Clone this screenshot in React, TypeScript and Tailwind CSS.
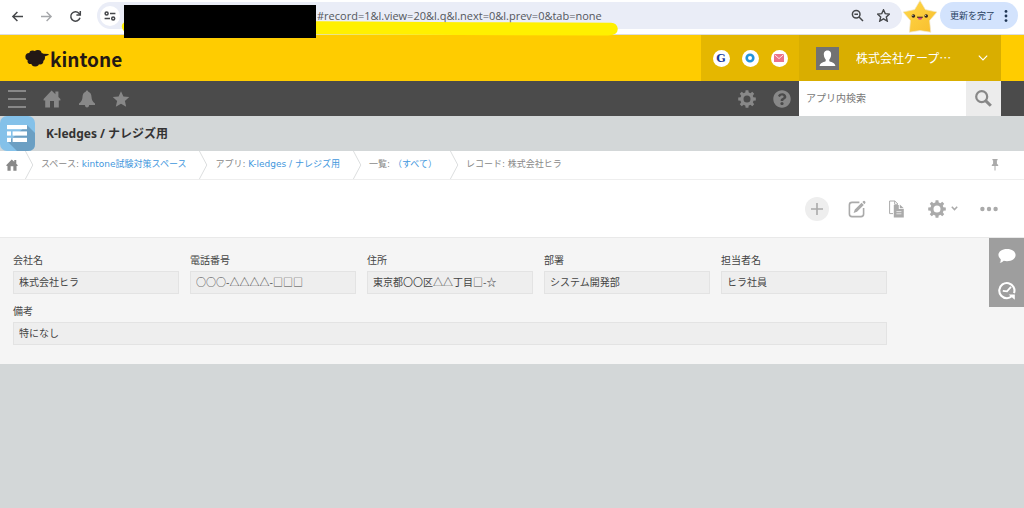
import React from "react";
import { FaQuestionCircle } from "react-icons/fa";

const UI_FONT = "font-['DejaVu_Sans','Noto_Sans_CJK_JP',sans-serif]";
const JP_FONT = "font-['Noto_Sans_CJK_JP',sans-serif]";
const CHROME_FONT = "font-['Open_Sans','Noto_Sans_CJK_JP',sans-serif]";

const STAR =
  "M12 1.5 L15.2 8.6 L23 9.4 L17.2 14.6 L18.9 22.3 L12 18.3 L5.1 22.3 L6.8 14.6 L1 9.4 L8.8 8.6 Z";

function Gear({ className }: { className?: string }) {
  return (
    <svg viewBox="0 0 18 18" className={className} aria-hidden="true">
      <circle cx="9" cy="9" r="5.1" fill="none" stroke="currentColor" strokeWidth="3.2" />
      {[0, 45, 90, 135, 180, 225, 270, 315].map((a) => (
        <path key={a} d="M7.2 3.2 L7.6 0.2 H10.4 L10.8 3.2 Z" fill="currentColor" transform={`rotate(${a} 9 9)`} />
      ))}
    </svg>
  );
}

function House({ className }: { className?: string }) {
  return (
    <svg viewBox="0 0 18 18" className={className} aria-hidden="true">
      <path
        fill="currentColor"
        d="M8.6 0.6 L12.4 4.2 V1.6 H15.4 V7 L17.4 9 V10.6 H15.8 V17.6 H11 V11 H7 V17.6 H2.2 V10.6 H0.6 V9 Z"
      />
    </svg>
  );
}

function BrowserBar() {
  return (
    <div className={`relative z-10 flex h-[35px] items-start border-b border-[#dcdde0] bg-white pt-[2px] pl-[11px] ${CHROME_FONT}`}>
      <div className="flex h-7 items-center gap-4">
        <button aria-label="戻る" className="text-[#45474a]">
          <svg viewBox="0 0 13 13" className="size-[13px]" fill="none" stroke="currentColor" strokeWidth="1.5">
            <path d="M12 6.5 H2 M6.4 2 L1.9 6.5 L6.4 11" />
          </svg>
        </button>
        <button aria-label="進む" className="text-[#a5a7aa]">
          <svg viewBox="0 0 13 13" className="size-[13px]" fill="none" stroke="currentColor" strokeWidth="1.4">
            <path d="M1 6.5 H11 M6.6 2 L11.1 6.5 L6.6 11" />
          </svg>
        </button>
        <button aria-label="再読み込み" className="text-[#45474a]">
          <svg viewBox="0 0 13 13" className="size-[13px]" fill="none" stroke="currentColor" strokeWidth="1.5">
            <path d="M11 7.8 A4.7 4.7 0 1 1 9.9 3.2 L11 4.4" />
            <path d="M11.3 1 V5 H7.4" />
          </svg>
        </button>
      </div>
      <div className="ml-[15px] flex h-[27px] flex-1 items-center rounded-full bg-[#eaedf7] pr-3 pl-[3px]">
        <button aria-label="サイト情報" className="flex size-5 items-center justify-center rounded-full bg-white text-[#45474a]">
          <svg viewBox="0 0 12 10" className="h-[10px] w-3" fill="none" stroke="currentColor" strokeWidth="1.5">
            <circle cx="2.6" cy="2.4" r="1.5" />
            <path d="M6 2.4 H11.4 M0.6 7.6 H6" />
            <circle cx="9.2" cy="7.6" r="1.5" />
          </svg>
        </button>
        <input
          aria-label="アドレス"
          readOnly
          defaultValue="#record=1&l.view=20&l.q&l.next=0&l.prev=0&tab=none"
          className="ml-[197px] h-5 min-w-0 flex-1 bg-transparent text-[11px] text-[#54575d] outline-none"
        />
        <button aria-label="ズーム" className="mr-[13px] text-[#45474a]">
          <svg viewBox="0 0 13 13" className="size-[13px]" fill="none" stroke="currentColor" strokeWidth="1.5">
            <circle cx="5.2" cy="5.2" r="3.8" />
            <path d="M8 8 L12 12 M3.4 5.2 H7" />
          </svg>
        </button>
        <button aria-label="ブックマーク" className="text-[#45474a]">
          <svg viewBox="0 0 24 24" className="size-[13px]" fill="none" stroke="currentColor" strokeWidth="2.6">
            <path d={STAR} />
          </svg>
        </button>
      </div>
      <svg viewBox="0 0 36 34" className="-mt-[2px] h-[34px] w-9" aria-hidden="true">
        <defs>
          <linearGradient id="star" x1="0" y1="0" x2="1" y2="1">
            <stop offset="0" stopColor="#ffd94a" />
            <stop offset="1" stopColor="#f8bd2c" />
          </linearGradient>
        </defs>
        <path
          d="M18 0.4 L23.4 9.6 L35 12 L27.6 20.6 L28.8 32.2 L18 30.6 L7.4 32.2 L8.4 20.6 L1 12 L12.6 9.6 Z"
          fill="url(#star)"
          stroke="#f1e7cf"
          strokeWidth="0.7"
          strokeLinejoin="round"
        />
        <circle cx="11.4" cy="16" r="1.8" fill="#33251c" />
        <circle cx="24.2" cy="16" r="1.8" fill="#33251c" />
        <circle cx="10.9" cy="15.4" r="0.5" fill="#fff" />
        <circle cx="23.7" cy="15.4" r="0.5" fill="#fff" />
        <path d="M15.6 17.2 H20.4 Q20 19.8 18 19.8 Q16 19.8 15.6 17.2 Z" fill="#d8437c" />
        <path d="M15 17.2 H20.8" stroke="#33251c" strokeWidth="1" />
      </svg>
      <button className="mr-[6px] ml-[2px] flex h-[27px] w-[78px] items-center justify-between rounded-full bg-[#d3e3fd] pr-[10px] pl-[10px] text-[9px] text-[#27405f]">
        更新を完了
        <svg viewBox="0 0 4 14" className="h-[14px] w-1" fill="#1f3554">
          <circle cx="2" cy="2.4" r="1.4" />
          <circle cx="2" cy="7" r="1.4" />
          <circle cx="2" cy="11.6" r="1.4" />
        </svg>
      </button>
      <svg viewBox="0 0 500 16" className="absolute top-[20px] left-[120px] h-4 w-[500px]" aria-hidden="true">
        <path
          d="M9 1.2 Q1.5 1.6 1.8 6.5 Q2.2 12 9 13.5 L230 14.4 L340 15 L488 15.6 Q497.8 15 497.8 9 Q497.4 3.2 491 2.8 L350 2.2 L200 1.2 Z"
          fill="#fff000"
        />
      </svg>
      <div className="absolute top-[5px] left-[124px] h-[33px] w-[192px] bg-black" />
    </div>
  );
}

function Header() {
  return (
    <header className="flex h-[46px] items-stretch bg-[#ffcc00]">
      <a href="#top" aria-label="kintone" className="ml-6 flex items-center text-[#231815]">
        <svg viewBox="0 0 26 18" className="h-[18px] w-[26px]" fill="currentColor">
          <circle cx="5.2" cy="7.8" r="3.8" />
          <circle cx="8.6" cy="4.8" r="3.4" />
          <circle cx="13.8" cy="4.9" r="3.9" />
          <circle cx="17.2" cy="8.4" r="3.8" />
          <circle cx="16" cy="12" r="3.4" />
          <circle cx="11.2" cy="13.4" r="4" />
          <circle cx="6.4" cy="12.2" r="2.8" />
          <ellipse cx="11" cy="9" rx="7" ry="5" />
          <path d="M16 3.4 L19.6 4.8 L24.6 5 V6 L20.6 7.6 Z" />
        </svg>
        <span className={`text-[19px] leading-none font-bold ${JP_FONT}`}>kintone</span>
      </a>
      <div className="ml-auto flex w-[98px] items-center justify-center gap-3 bg-[#e5b700]">
        <a href="#g" className="flex size-[17px] items-center justify-center rounded-full bg-white font-['DejaVu_Serif',serif] text-[11px] leading-none font-bold text-[#17399b]">
          G
        </a>
        <a href="#o" aria-label="サービス" className="flex size-[17px] items-center justify-center rounded-full bg-white">
          <svg viewBox="0 0 10 10" className="size-[10px]">
            <circle cx="5" cy="5" r="3.3" fill="none" stroke="#2394d9" strokeWidth="2.6" />
          </svg>
        </a>
        <a href="#mail" aria-label="メール" className="flex size-[17px] items-center justify-center rounded-full bg-white">
          <svg viewBox="0 0 10 8" className="h-2 w-[10px]">
            <rect width="10" height="8" rx="0.6" fill="#ec7389" />
            <path d="M0.6 0.8 L5 4.6 L9.4 0.8" fill="none" stroke="#fff" strokeWidth="0.8" />
          </svg>
        </a>
      </div>
      <button className="mr-[23px] flex w-[202px] items-center bg-[#d9ae00] pr-[13px] pl-[17px] text-white">
        <svg viewBox="0 0 23 23" className="size-[23px]">
          <rect width="23" height="23" fill="#727272" />
          <path
            d="M11.5 3.6 C8.6 3.6 7.6 5.8 7.9 8.2 C8.1 10.2 8.9 11.6 9.7 12.4 V14 C9 15.2 4 15.2 3.6 19 H19.4 C19 15.2 14 15.2 13.3 14 V12.4 C14.1 11.6 14.9 10.2 15.1 8.2 C15.4 5.8 14.4 3.6 11.5 3.6 Z"
            fill="#fff"
          />
        </svg>
        <span className={`ml-[17px] flex-1 text-left text-[12px] leading-none ${JP_FONT}`}>株式会社ケープ…</span>
        <svg viewBox="0 0 10 6" className="h-[6px] w-[10px]" fill="none" stroke="currentColor" strokeWidth="1.1">
          <path d="M0.8 0.6 L5 5 L9.2 0.6" />
        </svg>
      </button>
    </header>
  );
}

function NavBar() {
  return (
    <nav className="flex h-[35px] items-stretch bg-[#4b4b4b] text-[#888]">
      <div className="flex items-center pl-2">
        <button aria-label="メニュー">
          <svg viewBox="0 0 18 18" className="size-[18px]" stroke="currentColor" strokeWidth="2">
            <path d="M0 1 H18 M0 9 H18 M0 17 H18" />
          </svg>
        </button>
        <a href="#home" aria-label="ホーム" className="ml-[17px]">
          <House className="size-[18px]" />
        </a>
        <button aria-label="通知" className="ml-[17px]">
          <svg viewBox="0 0 18 18" className="size-[18px]" fill="currentColor">
            <path d="M9 0.4 Q10.2 0.4 10.3 1.8 Q13.3 2.8 13.5 7 Q13.7 11.2 17 13.4 V15 H1 V13.4 Q4.3 11.2 4.5 7 Q4.7 2.8 7.7 1.8 Q7.8 0.4 9 0.4 Z M6.8 15 H11.2 Q10.8 17.6 9 17.6 Q7.2 17.6 6.8 15 Z" />
          </svg>
        </button>
        <button aria-label="ブックマーク" className="ml-4">
          <svg viewBox="0 0 24 24" className="size-[18px]" fill="currentColor">
            <path d={STAR} />
          </svg>
        </button>
      </div>
      <div className="ml-auto flex items-center gap-[17px] pr-2">
        <button aria-label="設定">
          <Gear className="size-[18px]" />
        </button>
        <button aria-label="ヘルプ">
          <FaQuestionCircle className="size-[18px]" />
        </button>
      </div>
      <form className="mr-[23px] flex w-[202px]" onSubmit={(e) => e.preventDefault()}>
        <input
          aria-label="アプリ内検索"
          placeholder="アプリ内検索"
          className={`min-w-0 flex-1 bg-white pl-[7px] text-[10px] text-[#333] outline-none placeholder:text-[#777] ${UI_FONT}`}
        />
        <button aria-label="検索" className="flex w-[35px] items-center justify-center bg-[#ececec]">
          <svg viewBox="0 0 17 17" className="size-[17px]" fill="none" stroke="currentColor">
            <circle cx="6.7" cy="6.7" r="5.5" strokeWidth="2.2" />
            <path d="M10.6 10.6 L15.8 15.8" strokeWidth="3" />
          </svg>
        </button>
      </form>
    </nav>
  );
}

function AppTitle() {
  return (
    <div className="flex h-[35px] items-center bg-[#d3d7d8]">
      <svg viewBox="0 0 35 35" className="size-[35px]" aria-hidden="true">
        <rect width="35" height="35" rx="7" fill="#84c1e9" />
        <path d="M27 9 L35 17 V28 Q35 35 28 35 H17 L8 26 Z" fill="#6b9fc3" />
        <g fill="#fff">
          <rect x="7" y="9" width="20" height="4.2" />
          <rect x="7" y="15.4" width="4" height="4.2" />
          <rect x="12.6" y="15.4" width="14.4" height="4.2" />
          <rect x="7" y="21.8" width="4" height="4.2" />
          <rect x="12.6" y="21.8" width="14.4" height="4.2" />
        </g>
      </svg>
      <h1 className="ml-[11px] font-['Noto_Sans','Noto_Sans_CJK_JP',sans-serif] text-[12px] leading-none font-bold text-[#333]">
        K-ledges / ナレジズ用
      </h1>
    </div>
  );
}

const crumbs = [
  { label: "スペース: ", link: "kintone試験対策スペース" },
  { label: "アプリ: ", link: "K-ledges / ナレジズ用" },
  { label: "一覧: ", link: "（すべて）" },
  { label: "レコード: 株式会社ヒラ", link: "" },
];

function Breadcrumb() {
  return (
    <nav className={`flex h-[29px] items-stretch border-b border-[#eeeeee] bg-white text-[9px] text-[#888] ${UI_FONT}`}>
      <a href="#home" aria-label="ホーム" className="flex w-[25px] items-center pl-[6px]">
        <House className="size-3" />
      </a>
      {crumbs.map((c) => (
        <div key={c.label} className="flex items-center">
          <svg viewBox="0 0 9 28" className="h-7 w-[9px]" fill="none" stroke="#dcdedf">
            <path d="M0.4 0 L7.8 14 L0.4 28" />
          </svg>
          <span className="pr-[13px] pl-[7px] whitespace-pre">
            {c.label}
            {c.link && (
              <a href="#link" className="text-[#3f97dd]">
                {c.link}
              </a>
            )}
          </span>
        </div>
      ))}
      <button aria-label="固定" className="mr-[25px] ml-auto text-[#aaa]">
        <svg viewBox="0 0 8 12" className="h-3 w-2" fill="currentColor">
          <path d="M1.4 0 H6.6 V1.2 H5.9 V4.8 L7.2 6 V7 H4.5 V11 L4 12 L3.5 11 V7 H0.8 V6 L2.1 4.8 V1.2 H1.4 Z" />
        </svg>
      </button>
    </nav>
  );
}

function Toolbar() {
  return (
    <div className="flex h-[58px] items-center justify-end border-b border-[#e9e9e9] bg-white pr-[26px] text-[#aaa]">
      <button aria-label="追加" className="flex size-6 items-center justify-center rounded-full bg-[#eeeeee]">
        <svg viewBox="0 0 12 12" className="size-3" stroke="currentColor" strokeWidth="1.6">
          <path d="M6 0 V12 M0 6 H12" />
        </svg>
      </button>
      <button aria-label="編集" className="ml-[19px]">
        <svg viewBox="0 0 18 18" className="size-[18px]">
          <path d="M11.4 2.4 H4 Q1.4 2.4 1.4 5 V14 Q1.4 16.6 4 16.6 H13 Q15.6 16.6 15.6 14 V8" fill="none" stroke="currentColor" strokeWidth="1.6" />
          <path d="M5.6 13 L6.8 9.6 L13.6 2.8 L15.8 5 L9 11.8 Z M14.4 2 L15.4 1 Q16.2 .4 17 1.2 Q18 2.2 17.2 3.2 L16.4 4.2 Z" fill="currentColor" />
        </svg>
      </button>
      <button aria-label="再利用" className="ml-[22px]">
        <svg viewBox="0 0 18 18" className="size-[18px]">
          <path d="M5 13.6 H1.6 V1 H6.8 L10 4.2" fill="none" stroke="currentColor" strokeWidth="1" />
          <path d="M6.6 1 V4.4 H10" fill="none" stroke="currentColor" strokeWidth="0.9" />
          <path d="M5.8 5 H10.8 V9 H15.8 V17.4 H5.8 Z M11.8 4.6 L15.8 8.2 H11.8 Z" fill="currentColor" />
          <path d="M8.4 11.6 H13.4 M8.4 13.8 H13.4" stroke="#fff" strokeWidth="0.7" />
        </svg>
      </button>
      <button aria-label="設定" className="ml-[22px] flex items-center gap-[5px]">
        <Gear className="size-[18px]" />
        <svg viewBox="0 0 7 5" className="h-[5px] w-[7px]" fill="none" stroke="currentColor" strokeWidth="1.5">
          <path d="M0.8 0.8 L3.5 3.6 L6.2 0.8" />
        </svg>
      </button>
      <button aria-label="その他" className="ml-[22px]">
        <svg viewBox="0 0 18 6" className="h-[6px] w-[18px]" fill="currentColor">
          <circle cx="2.4" cy="3" r="2.2" />
          <circle cx="9" cy="3" r="2.2" />
          <circle cx="15.6" cy="3" r="2.2" />
        </svg>
      </button>
    </div>
  );
}

const fields = [
  { id: "company", label: "会社名", value: "株式会社ヒラ" },
  { id: "phone", label: "電話番号", value: "○○○-△△△△-□□□" },
  { id: "address", label: "住所", value: "東京都〇〇区△△丁目□-☆" },
  { id: "department", label: "部署", value: "システム開発部" },
  { id: "person", label: "担当者名", value: "ヒラ社員" },
  { id: "note", label: "備考", value: "特になし" },
];

function Record() {
  return (
    <main className="flex items-start bg-[#f5f5f5] pl-[13px]">
      <div className={`mr-[102px] grid flex-1 grid-cols-5 gap-x-[11px] gap-y-[10px] pt-[15px] pb-[19px] text-[10px] text-[#444] ${JP_FONT}`}>
        {fields.map((f) => (
          <div key={f.id} className={f.id === "note" ? "col-span-5" : ""}>
            <label htmlFor={f.id} className="block h-[18px] leading-[14px]">
              {f.label}
            </label>
            <input
              id={f.id}
              readOnly
              defaultValue={f.value}
              className="block h-[23px] w-full border border-[#e3e3e3] bg-[#eeeeee] px-[5px] pb-[2px] outline-none"
            />
          </div>
        ))}
      </div>
      <aside className="flex w-[35px] flex-col bg-[#9e9e9e] text-white">
        <button aria-label="コメント" className="flex h-9 items-center justify-center">
          <svg viewBox="0 0 18 16" className="h-4 w-[18px]" fill="currentColor">
            <path d="M9 1 C14 1 17.6 3.6 17.6 7 C17.6 10.6 14 13.2 9 13.2 Q7.2 13.2 5.8 12.8 Q4 14.8 1.6 15 Q2.8 13.6 2.8 11.4 Q.4 9.8 .4 7 C.4 3.6 4 1 9 1 Z" />
          </svg>
        </button>
        <button aria-label="変更履歴" className="flex h-[33px] items-center justify-center">
          <svg viewBox="0 0 18 19" className="h-[19px] w-[18px]">
            <path d="M16 12.2 A7.6 7.6 0 1 0 9 17.2 Q11.6 17.2 14 15" fill="none" stroke="currentColor" strokeWidth="2.1" />
            <path d="M10.6 13.4 H16.8 V18.8 Z" fill="currentColor" />
            <path d="M4.8 9.8 L9 10.4 L13 5.8" fill="none" stroke="currentColor" strokeWidth="1.8" />
          </svg>
        </button>
      </aside>
    </main>
  );
}

export default function App() {
  return (
    <div className="min-h-screen bg-[#d3d7d8]">
      <BrowserBar />
      <Header />
      <NavBar />
      <AppTitle />
      <Breadcrumb />
      <Toolbar />
      <Record />
    </div>
  );
}
